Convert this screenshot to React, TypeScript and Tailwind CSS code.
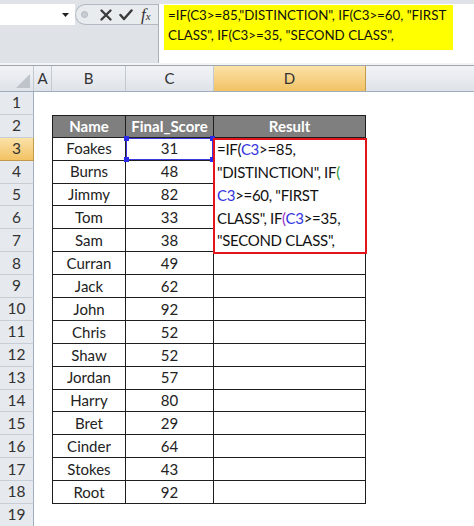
import React from "react";

type Row = { n: number; kind: "empty" | "head" | "data"; name?: string; score?: number };

const data: [string, number][] = [
  ["Foakes", 31],
  ["Burns", 48],
  ["Jimmy", 82],
  ["Tom", 33],
  ["Sam", 38],
  ["Curran", 49],
  ["Jack", 62],
  ["John", 92],
  ["Chris", 52],
  ["Shaw", 52],
  ["Jordan", 57],
  ["Harry", 80],
  ["Bret", 29],
  ["Cinder", 64],
  ["Stokes", 43],
  ["Root", 92],
];

const rows: Row[] = [
  { n: 1, kind: "empty" },
  { n: 2, kind: "head" },
  ...data.map(([name, score], i) => ({ n: i + 3, kind: "data" as const, name, score })),
  { n: 19, kind: "empty" },
];

const Blue = ({ children }: { children: React.ReactNode }) => (
  <span className="text-[#3535e0]">{children}</span>
);

function FormulaOverlay() {
  return (
    <div className="absolute left-[-1px] top-0 z-10 w-[154px] h-[116px] border-2 border-[#e3141b] bg-white">
      <div className="-mt-[2px] pl-[2px] text-[15px] tracking-[-0.3px] leading-[22.9px] text-[#111] whitespace-nowrap">
        <div>
          =IF(<Blue>C3</Blue>&gt;=85,
        </div>
        <div>
          "DISTINCTION", IF<span className="text-[#2f9a3c]">(</span>
        </div>
        <div>
          <Blue>C3</Blue>&gt;=60, "FIRST
        </div>
        <div>
          CLASS", IF<span className="text-[#9a32c2]">(</span>
          <Blue>C3</Blue>&gt;=35,
        </div>
        <div>"SECOND CLASS",</div>
      </div>
    </div>
  );
}

function C3Highlight() {
  return (
    <div className="absolute inset-0 border border-[#3a3ae0] z-[5]">
      <div className="absolute left-[-3px] top-[-3px] w-[5px] h-[5px] bg-[#2a2ae8]" />
      <div className="absolute left-[-3px] bottom-[-3px] w-[5px] h-[5px] bg-[#2a2ae8]" />
      <div className="absolute right-[-3px] top-[-3px] w-[5px] h-[5px] bg-[#2a2ae8]" />
      <div className="absolute right-[-3px] bottom-[-3px] w-[5px] h-[5px] bg-[#2a2ae8]" />
    </div>
  );
}

export default function App() {
  return (
    <div className="w-[474px] h-[526px] overflow-hidden bg-white font-['Lato','Liberation_Sans',sans-serif] text-[#222]">
      {/* Formula bar */}
      <div className="h-[63px] bg-[#dfe3e8] pt-[4px] flex">
        <div className="w-[158px] flex flex-col">
          <div className="h-[21px] flex items-stretch">
            <div className="w-[75px] bg-white flex items-center justify-end pr-[6px]">
              <svg width="7" height="4" viewBox="0 0 7 4">
                <path d="M0 0 L7 0 L3.5 4 Z" fill="#222" />
              </svg>
            </div>
            <div className="flex-1 flex items-center rounded-l-full border-l border-y border-[#b4bac3] bg-[#e9ecef] pl-[5px]">
              <div className="w-[7px] h-[7px] rounded-full bg-[#c8cdd3] border border-[#b0b6bf]" />
              <svg className="ml-[12px]" width="12" height="12" viewBox="0 0 12 12">
                <path d="M1.5 1.5 L10.5 10.5 M10.5 1.5 L1.5 10.5" stroke="#3a3a3a" strokeWidth="2.3" strokeLinecap="round" />
              </svg>
              <svg className="ml-[7px]" width="14" height="12" viewBox="0 0 14 12">
                <path d="M1.5 6 L5 10 L12.5 1.5" stroke="#3a3a3a" strokeWidth="2.5" fill="none" strokeLinecap="round" strokeLinejoin="round" />
              </svg>
              <span className="ml-[8px] font-['Liberation_Serif',serif] italic text-[#333] text-[17px] leading-none">
                f<span className="text-[11px]">x</span>
              </span>
            </div>
          </div>
        </div>
        <div className="flex-1 bg-white border-l border-[#aab1ba] pl-[5px] pt-[1px]">
          <div className="w-[289px] h-[45px] bg-[#ffff00] pl-[4px] text-[13.3px] leading-[20px] text-[#111] whitespace-nowrap">
            <div>=IF(C3&gt;=85,"DISTINCTION", IF(C3&gt;=60, "FIRST</div>
            <div>CLASS", IF(C3&gt;=35, "SECOND CLASS",</div>
          </div>
        </div>
      </div>
      <div className="h-[3px] bg-[#f2f4f6] border-b border-[#9da5af]" />

      {/* Column headers */}
      <div className="h-[26px] flex bg-gradient-to-b from-[#f1f3f6] to-[#dfe3e8] border-b border-[#9eadc0] text-[15px] text-[#333]">
        <div className="w-[34px] border-r border-[#c3c9d1] relative">
          <svg className="absolute right-[3px] bottom-[3px]" width="14" height="14" viewBox="0 0 14 14">
            <path d="M14 0 L14 14 L0 14 Z" fill="#bfc4cb" />
          </svg>
        </div>
        <div className="w-[18px] border-r border-[#c3c9d1] flex items-center justify-center">A</div>
        <div className="w-[74px] border-r border-[#c3c9d1] flex items-center justify-center">B</div>
        <div className="w-[88px] border-r border-[#c3c9d1] flex items-center justify-center">C</div>
        <div className="w-[152px] border-r border-[#c29a4a] bg-gradient-to-b from-[#fbe2a8] to-[#f2c262] flex items-center justify-center">
          D
        </div>
        <div className="flex-1" />
      </div>

      {/* Grid */}
      <div className="flex flex-col">
        {rows.map((r) => (
          <div key={r.n} className="h-[22.9px] flex text-[15px]">
            <div
              className={
                r.n === 3
                  ? "w-[34px] shrink-0 flex items-center justify-center border-r border-b border-[#c29a4a] bg-gradient-to-b from-[#fbe2a8] to-[#f2c262] text-[#333] text-[15.5px]"
                  : "w-[34px] shrink-0 flex items-center justify-center border-r border-b border-r-[#9eadc0] border-b-[#c8ced6] bg-[#e6e9ee] text-[#333] text-[15.5px]"
              }
            >
              {r.n}
            </div>
            <div className="w-[18px] shrink-0" />
            {r.kind === "empty" && <div className="flex-1" />}
            {r.kind === "head" && (
              <>
                <div className="w-[74px] shrink-0 border border-[#1e1e1e] bg-[#7f7f7f] text-white font-bold flex items-center justify-center">
                  Name
                </div>
                <div className="w-[88px] shrink-0 border-y border-r border-[#1e1e1e] bg-[#7f7f7f] text-white font-bold flex items-center justify-center">
                  Final_Score
                </div>
                <div className="w-[152px] shrink-0 border-y border-r border-[#1e1e1e] bg-[#7f7f7f] text-white font-bold flex items-center justify-center">
                  Result
                </div>
                <div className="flex-1" />
              </>
            )}
            {r.kind === "data" && (
              <>
                <div className="w-[74px] shrink-0 border-x border-b border-[#1e1e1e] flex items-center justify-center">
                  {r.name}
                </div>
                <div className="w-[88px] shrink-0 border-r border-b border-[#1e1e1e] flex items-center justify-center relative">
                  {r.score}
                  {r.n === 3 && <C3Highlight />}
                </div>
                <div className="w-[152px] shrink-0 border-r border-b border-[#1e1e1e] relative">
                  {r.n === 3 && <FormulaOverlay />}
                </div>
                <div className="flex-1" />
              </>
            )}
          </div>
        ))}
      </div>
    </div>
  );
}
